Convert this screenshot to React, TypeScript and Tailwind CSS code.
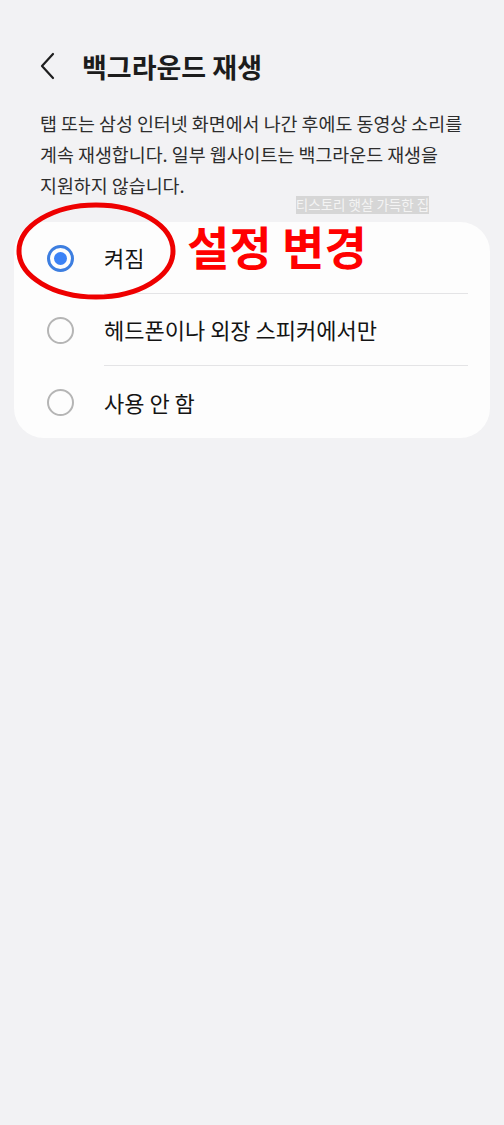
import React from "react";

const font = { fontFamily: '"Noto Sans CJK KR", "Noto Sans", sans-serif' };

function Radio({ checked }: { checked?: boolean }) {
  if (checked) {
    return (
      <div className="w-[27px] h-[27px] rounded-full border-[3px] border-[#3d7ee0] flex items-center justify-center">
        <div className="w-[13px] h-[13px] rounded-full bg-[#3b82f6]" />
      </div>
    );
  }
  return <div className="w-[27px] h-[27px] rounded-full border-2 border-[#b5b5b5]" />;
}

function Row({ label, checked, divider }: { label: string; checked?: boolean; divider?: boolean }) {
  return (
    <div className="flex h-[72px] items-stretch">
      <div className="w-[90px] flex items-center justify-center pl-[2px]">
        <Radio checked={checked} />
      </div>
      <div className={`flex-1 mr-[22px] flex items-center ${divider ? "border-b border-[#e4e4e6]" : ""}`}>
        <span className="text-[22px] text-[#141414]">{label}</span>
      </div>
    </div>
  );
}

export default function App() {
  return (
    <div className="relative min-h-[1125px] w-full bg-[#f2f2f4]" style={font}>
      <div className="pt-[40px] h-[92px] flex items-center">
        <div className="w-[82px] flex items-center pl-[38px]">
          <svg width="20" height="28" viewBox="0 0 20 28" fill="none">
            <path d="M15 2 L4 14 L15 26" stroke="#1e1e1e" strokeWidth="2.2" strokeLinecap="round" strokeLinejoin="round" />
          </svg>
        </div>
        <h1 className="text-[27px] font-bold text-[#1c1c1c] leading-none">백그라운드 재생</h1>
      </div>
      <p className="mt-[16px] px-[40px] text-[18.4px] leading-[31px] text-[#2d2d2d] whitespace-nowrap">
        탭 또는 삼성 인터넷 화면에서 나간 후에도 동영상 소리를
        <br />
        계속 재생합니다. 일부 웹사이트는 백그라운드 재생을
        <br />
        지원하지 않습니다.
      </p>
      <div className="mt-[21px] mx-[14px] rounded-[30px] bg-[#fdfdfd]">
        <Row label="켜짐" checked divider />
        <Row label="헤드폰이나 외장 스피커에서만" divider />
        <Row label="사용 안 함" />
      </div>

      <div className="absolute left-[296px] top-[196px] w-[133px] h-[18px] bg-[#d6d6d6] flex items-center justify-center">
        <span className="text-[13.5px] text-[#f4f4f4] leading-none whitespace-nowrap">티스토리 햇살 가득한 집</span>
      </div>
      <svg className="absolute left-0 top-0" width="200" height="320" viewBox="0 0 200 320">
        <ellipse cx="96" cy="251" rx="77" ry="46" fill="none" stroke="#ee0000" strokeWidth="5" />
      </svg>
      <div className="absolute left-[187px] top-[222px] text-[46px] font-bold text-[#ff0000] leading-none whitespace-nowrap">
        설정 변경
      </div>
    </div>
  );
}
